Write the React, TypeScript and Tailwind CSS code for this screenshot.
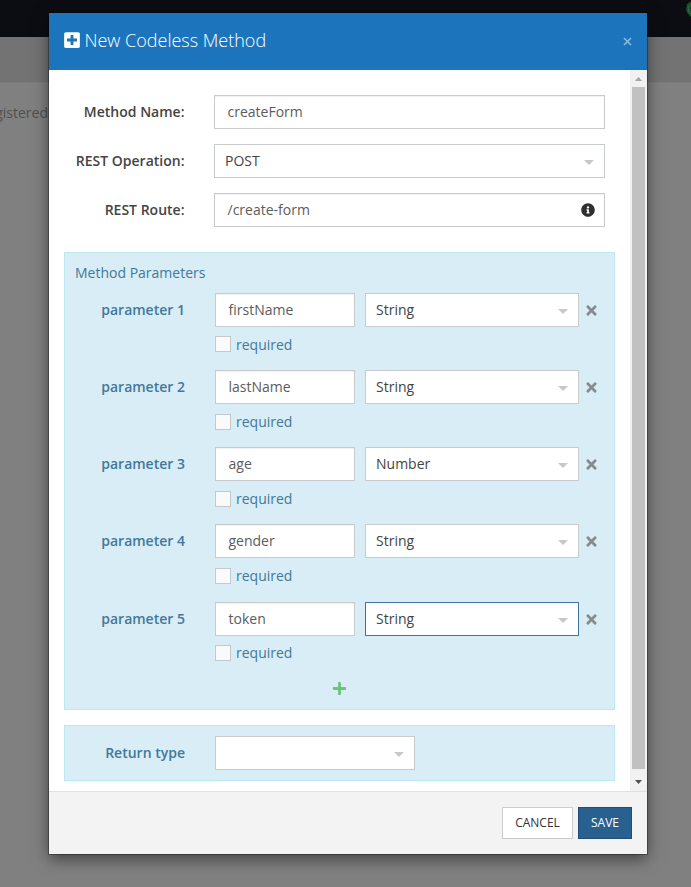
import React from 'react';
import { FaInfoCircle, FaPlus, FaPlusSquare, FaTimes } from 'react-icons/fa';

type Parameter = { name: string; type: string; focused?: boolean };

const parameters: Parameter[] = [
  { name: 'firstName', type: 'String' },
  { name: 'lastName', type: 'String' },
  { name: 'age', type: 'Number' },
  { name: 'gender', type: 'String' },
  { name: 'token', type: 'String', focused: true },
];

function Caret() {
  return (
    <svg className="mt-[3px] h-[5px] w-[10px] shrink-0 text-[#c8c8c8]" viewBox="0 0 10 5">
      <path d="M0 0H10L5 5Z" fill="currentColor" />
    </svg>
  );
}

function TextInput({ value, children }: { value: string; children?: React.ReactNode }) {
  return (
    <div className="flex h-[34px] w-full items-center justify-between border border-[#c8cbcc] bg-white pr-[9px] pl-[12.5px] text-[#5c5c5c] shadow-[inset_0_1px_1px_rgba(0,0,0,0.06)]">
      <span>{value}</span>
      {children}
    </div>
  );
}

function Select({ value, focused }: { value: string; focused?: boolean }) {
  return (
    <div
      className={`flex h-[34px] w-full items-center justify-between border bg-white px-[10px] text-[#444444] ${
        focused ? 'border-[#3f73a0]' : 'border-[#c8cbcc]'
      }`}
    >
      <span>{value}</span>
      <Caret />
    </div>
  );
}

function Field({ label, children }: { label: string; children: React.ReactNode }) {
  return (
    <div className="mb-[15px] flex h-[34px] items-center">
      <label className="w-[120.5px] shrink-0 text-right font-semibold text-[#444444]">{label}</label>
      <div className="ml-[29.5px] w-[391px]">{children}</div>
    </div>
  );
}

function ParameterRow({ index, parameter }: { index: number; parameter: Parameter }) {
  return (
    <div className="h-[77.15px]">
      <div className="flex h-[34px] items-center">
        <label className="w-[120px] shrink-0 text-right font-semibold">parameter {index}</label>
        <div className="ml-[30px] w-[140px]">
          <TextInput value={parameter.name} />
        </div>
        <div className="ml-[10px] w-[214px]">
          <Select value={parameter.type} focused={parameter.focused} />
        </div>
        <FaTimes className="mt-px ml-[5px] text-[#858c90]" size={15} />
      </div>
      <div className="mt-[9.4px] ml-[150px] flex h-4 items-center">
        <span className="size-4 border border-[#c4c8ca] bg-[#fafafa]" />
        <span className="mt-px ml-[5px]">required</span>
      </div>
    </div>
  );
}

function Scrollbar() {
  return (
    <div className="flex w-[17px] shrink-0 flex-col items-center bg-[#f1f1f1]">
      <div className="flex h-[17px] items-center">
        <svg className="h-1 w-[7px]" viewBox="0 0 7 4">
          <path d="M3.5 0L7 4H0Z" fill="#a3a3a3" />
        </svg>
      </div>
      <div className="w-[13px] flex-1 bg-[#c1c1c1]" />
      <div className="flex h-[22px] items-center pt-1">
        <svg className="h-1 w-[7px]" viewBox="0 0 7 4">
          <path d="M0 0H7L3.5 4Z" fill="#505050" />
        </svg>
      </div>
    </div>
  );
}

export default function App() {
  return (
    <div className="relative h-[887px] w-[691px] overflow-hidden bg-[#808080] font-['Open_Sans',sans-serif] text-sm leading-5">
      <div className="flex h-[37px] justify-end bg-[#0b0d13]">
        <svg className="mt-[2px] h-[15px] w-[5px]" viewBox="0 0 5 15">
          <path d="M4 0L1 2L0 8L2 12L5 15V0Z" fill="#174f2e" />
          <path d="M5 3L2 5L3 10L5 12" fill="none" stroke="#2f6e4a" />
        </svg>
      </div>
      <div className="h-[46px] border-b border-[#7a7a7a] bg-[#737373]" />
      <div className="flex h-[60px] w-[48px] items-center justify-end whitespace-nowrap text-[#505050]">registered</div>

      <div className="absolute top-[13px] left-[49px] flex h-[841px] w-[598px] flex-col bg-white shadow-[0_0_0_1px_rgba(0,0,0,0.3),0_5px_15px_rgba(0,0,0,0.5)]">
        <header className="flex h-[57px] items-center bg-[#1c75bc] pr-[14px] pl-[14px] text-white">
          <FaPlusSquare size={18} className="mb-[3px] shrink-0" />
          <h1 className="mb-[3px] ml-[3.5px] flex-1 text-lg font-light">New Codeless Method</h1>
          <svg className="mr-[1px] size-[9px]" viewBox="0 0 9 9">
            <path d="M1 1L8 8M8 1L1 8" stroke="#8cbadd" strokeWidth="1.6" />
          </svg>
        </header>

        <div className="flex h-[721px]">
          <div className="flex-1 px-[15px] pt-[25px]">
            <Field label="Method Name:">
              <TextInput value="createForm" />
            </Field>
            <Field label="REST Operation:">
              <Select value="POST" />
            </Field>
            <Field label="REST Route:">
              <TextInput value="/create-form">
                <FaInfoCircle size={14} className="text-[#2f2f2f]" />
              </TextInput>
            </Field>

            <section className="mt-[25px] h-[458px] w-[551px] border border-[#bce8f1] bg-[#d9edf7] pt-[10px] text-[#42789a]">
              <h2 className="mb-[10px] ml-[10px]">Method Parameters</h2>
              {parameters.map((parameter, i) => (
                <ParameterRow key={parameter.name} index={i + 1} parameter={parameter} />
              ))}
              <div className="mt-[2px] flex justify-center">
                <FaPlus size={15} className="text-[#6fc17c]" />
              </div>
            </section>

            <section className="mt-[15px] flex h-[56px] w-[551px] items-center border border-[#bce8f1] bg-[#d9edf7] text-[#42789a]">
              <label className="w-[120px] text-right font-semibold">Return type</label>
              <div className="ml-[30px] w-[200px]">
                <Select value="" />
              </div>
            </section>
          </div>
          <Scrollbar />
        </div>

        <footer className="flex flex-1 items-center justify-end gap-[5px] border-t border-[#e0e0e0] bg-[#f3f3f3] pr-[15px] text-xs">
          <button className="h-8 w-[71px] border border-[#cccccc] bg-white text-[#333333]">CANCEL</button>
          <button className="h-8 w-[54px] border border-[#204d74] bg-[#286090] text-white">SAVE</button>
        </footer>
      </div>
    </div>
  );
}
